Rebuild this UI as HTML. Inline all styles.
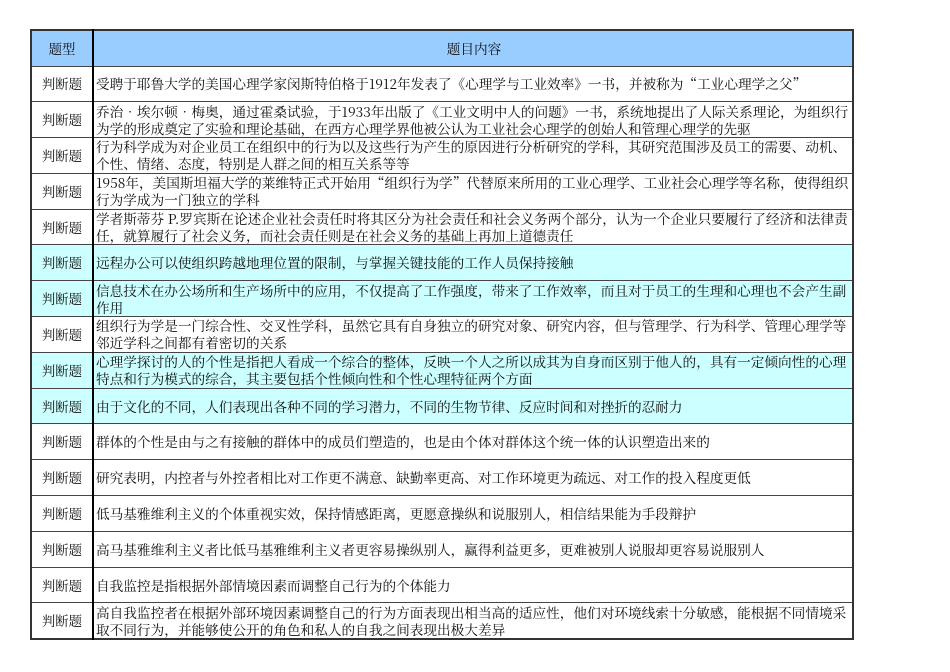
<!DOCTYPE html>
<html><head><meta charset="utf-8"><style>
body{margin:0;background:#fff;width:950px;height:672px;overflow:hidden;font-family:"Noto Serif CJK SC","Liberation Serif",serif;color:#111}
table{position:absolute;left:30px;top:29px;border-collapse:collapse;border:2px solid #333;table-layout:fixed}
td{border:1px solid #444;height:35.8px;padding:0;font-size:13.65px;line-height:17px;box-sizing:border-box;white-space:nowrap;overflow:hidden}
td.a{width:62px;text-align:center;border-right:2px solid #000;font-size:13.4px}
td.b{width:760px;padding-left:2px}
tr.h td{background:#99CCFF;text-align:center;height:36px}
tr.c td{background:#CCFFFF}
</style></head><body>
<table>
<tr class="h"><td class="a">题型</td><td class="b" style="text-align:center">题目内容</td></tr>
<tr><td class="a">判断题</td><td class="b">受聘于耶鲁大学的美国心理学家闵斯特伯格于1912年发表了《心理学与工业效率》一书，并被称为“工业心理学之父”</td></tr>
<tr><td class="a">判断题</td><td class="b">乔治•埃尔顿•梅奥，通过霍桑试验，于1933年出版了《工业文明中人的问题》一书，系统地提出了人际关系理论，为组织行<br>为学的形成奠定了实验和理论基础，在西方心理学界他被公认为工业社会心理学的创始人和管理心理学的先驱</td></tr>
<tr><td class="a">判断题</td><td class="b">行为科学成为对企业员工在组织中的行为以及这些行为产生的原因进行分析研究的学科，其研究范围涉及员工的需要、动机、<br>个性、情绪、态度，特别是人群之间的相互关系等等</td></tr>
<tr><td class="a">判断题</td><td class="b">1958年，美国斯坦福大学的莱维特正式开始用“组织行为学”代替原来所用的工业心理学、工业社会心理学等名称，使得组织<br>行为学成为一门独立的学科</td></tr>
<tr><td class="a">判断题</td><td class="b">学者斯蒂芬 P.罗宾斯在论述企业社会责任时将其区分为社会责任和社会义务两个部分，认为一个企业只要履行了经济和法律责<br>任，就算履行了社会义务，而社会责任则是在社会义务的基础上再加上道德责任</td></tr>
<tr class="c"><td class="a">判断题</td><td class="b">远程办公可以使组织跨越地理位置的限制，与掌握关键技能的工作人员保持接触</td></tr>
<tr class="c"><td class="a">判断题</td><td class="b">信息技术在办公场所和生产场所中的应用，不仅提高了工作强度，带来了工作效率，而且对于员工的生理和心理也不会产生副<br>作用</td></tr>
<tr><td class="a">判断题</td><td class="b">组织行为学是一门综合性、交叉性学科，虽然它具有自身独立的研究对象、研究内容，但与管理学、行为科学、管理心理学等<br>邻近学科之间都有着密切的关系</td></tr>
<tr class="c"><td class="a">判断题</td><td class="b">心理学探讨的人的个性是指把人看成一个综合的整体，反映一个人之所以成其为自身而区别于他人的，具有一定倾向性的心理<br>特点和行为模式的综合，其主要包括个性倾向性和个性心理特征两个方面</td></tr>
<tr class="c"><td class="a">判断题</td><td class="b">由于文化的不同，人们表现出各种不同的学习潜力，不同的生物节律、反应时间和对挫折的忍耐力</td></tr>
<tr><td class="a">判断题</td><td class="b">群体的个性是由与之有接触的群体中的成员们塑造的，也是由个体对群体这个统一体的认识塑造出来的</td></tr>
<tr><td class="a">判断题</td><td class="b">研究表明，内控者与外控者相比对工作更不满意、缺勤率更高、对工作环境更为疏远、对工作的投入程度更低</td></tr>
<tr><td class="a">判断题</td><td class="b">低马基雅维利主义的个体重视实效，保持情感距离，更愿意操纵和说服别人，相信结果能为手段辩护</td></tr>
<tr><td class="a">判断题</td><td class="b">高马基雅维利主义者比低马基雅维利主义者更容易操纵别人，赢得利益更多，更难被别人说服却更容易说服别人</td></tr>
<tr><td class="a">判断题</td><td class="b">自我监控是指根据外部情境因素而调整自己行为的个体能力</td></tr>
<tr><td class="a">判断题</td><td class="b">高自我监控者在根据外部环境因素调整自己的行为方面表现出相当高的适应性，他们对环境线索十分敏感，能根据不同情境采<br>取不同行为，并能够使公开的角色和私人的自我之间表现出极大差异</td></tr>
</table>
</body></html>
